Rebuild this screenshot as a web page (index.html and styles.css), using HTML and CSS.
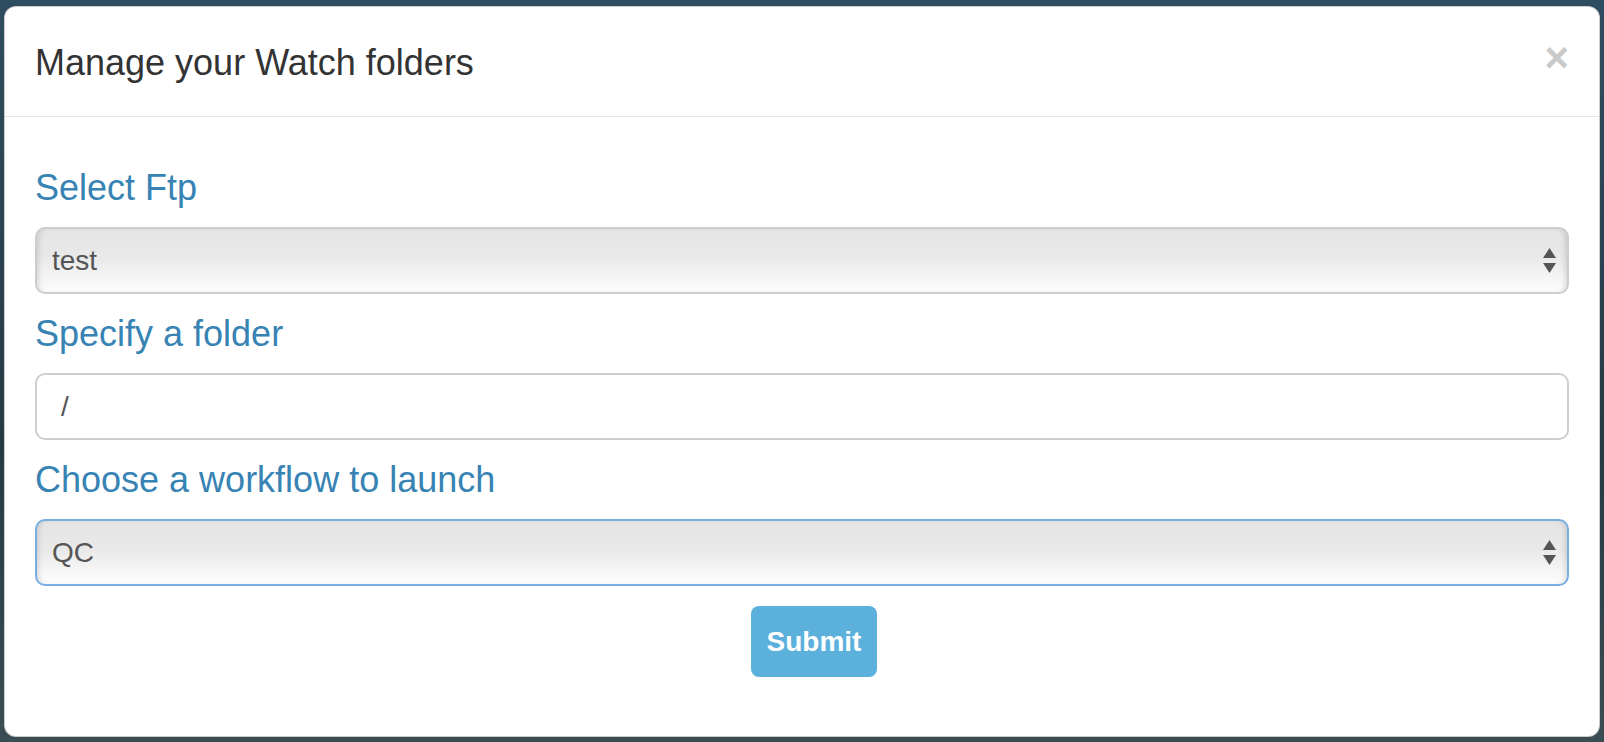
FILE: index.html
```html
<!DOCTYPE html>
<html lang="en">
<head>
<meta charset="utf-8">
<title>Manage your Watch folders</title>
<link rel="stylesheet" href="styles.css">
</head>
<body>
<div class="backdrop">
  <div class="modal">
    <div class="modal-header">
      <h4 class="modal-title">Manage your Watch folders</h4>
      <button class="close" type="button">&times;</button>
    </div>
    <form class="modal-body">
      <h4 class="field-label">Select Ftp</h4>
      <div class="select-wrap">
        <select class="select"><option>test</option></select>
        <svg class="arrows" width="13" height="25" viewBox="0 0 13 25"><polygon points="6.5,0 13,10 0,10" fill="#555"/><polygon points="0,15 13,15 6.5,25" fill="#555"/></svg>
      </div>
      <h4 class="field-label">Specify a folder</h4>
      <input class="text-input" type="text" value="/">
      <h4 class="field-label">Choose a workflow to launch</h4>
      <div class="select-wrap">
        <select class="select focused"><option>QC</option></select>
        <svg class="arrows" width="13" height="25" viewBox="0 0 13 25"><polygon points="6.5,0 13,10 0,10" fill="#555"/><polygon points="0,15 13,15 6.5,25" fill="#555"/></svg>
      </div>
      <div class="actions">
        <button class="btn-submit" type="button">Submit</button>
      </div>
    </form>
  </div>
</div>
</body>
</html>
```

FILE: styles.css
```css
* { box-sizing: border-box; }
html, body { margin: 0; padding: 0; }
body {
  width: 1604px;
  height: 742px;
  overflow: hidden;
  font-family: "Liberation Sans", Arial, sans-serif;
  background: #2b3f48;
}
.backdrop {
  height: 742px;
  padding: 6px 4px 0 4px;
  background: linear-gradient(180deg, #2f4d60 0%, #263a44 60%, #3a4d52 100%);
}
.modal {
  width: 1596px;
  height: 731px;
  background: #fff;
  border: 1px solid rgba(0,0,0,0.2);
  border-radius: 12px;
  overflow: hidden;
}
.modal-header {
  display: flex;
  justify-content: space-between;
  align-items: flex-start;
  padding: 30px 30px 28px 30px;
  border-bottom: 1px solid #e5e5e5;
  height: 110px;
}
.modal-title {
  margin: 0;
  font-size: 36px;
  line-height: 51px;
  font-weight: normal;
  color: #333;
}
.close {
  border: 0;
  background: none;
  padding: 0;
  margin-top: 1px;
  font-family: "Liberation Sans", Arial, sans-serif;
  font-size: 42px;
  font-weight: bold;
  line-height: 40px;
  color: #c9c9c9;
}
.modal-body {
  display: flex;
  flex-direction: column;
  padding: 31px 30px 0 30px;
  margin: 0;
}
.field-label {
  margin: 20px 0 19px 0;
  font-size: 36px;
  line-height: 40px;
  font-weight: normal;
  color: #3783b4;
}
.select-wrap {
  position: relative;
  height: 67px;
}
.select {
  appearance: none;
  -webkit-appearance: none;
  width: 100%;
  height: 67px;
  margin: 0;
  padding: 0 60px 0 15px;
  font-family: "Liberation Sans", Arial, sans-serif;
  font-size: 28px;
  color: #555;
  border: 2px solid #cdcdcd;
  border-radius: 10px;
  background: linear-gradient(180deg, #e4e4e4 0%, #e9e9e9 45%, #f6f6f6 80%, #fdfdfd 100%);
  box-shadow: inset 5px 0 5px -3px rgba(0,0,0,0.12), inset -5px 0 5px -3px rgba(0,0,0,0.12);
}
.select.focused {
  border-color: #78aee4;
}
.arrows {
  position: absolute;
  right: 13px;
  top: 21px;
}
.text-input {
  width: 100%;
  height: 67px;
  margin: 0;
  padding: 0 24px;
  font-family: "Liberation Sans", Arial, sans-serif;
  font-size: 28px;
  color: #555;
  border: 2px solid #cecece;
  border-radius: 10px;
  background: #fff;
  outline: none;
}
.actions {
  display: flex;
  justify-content: center;
  margin-top: 20px;
  padding-left: 24px;
}
.btn-submit {
  height: 71px;
  padding: 0 16px;
  border: 0;
  border-radius: 8px;
  background: #5bb1dc;
  color: #fff;
  font-family: "Liberation Sans", Arial, sans-serif;
  font-size: 28px;
  font-weight: bold;
  line-height: 71px;
}
```
